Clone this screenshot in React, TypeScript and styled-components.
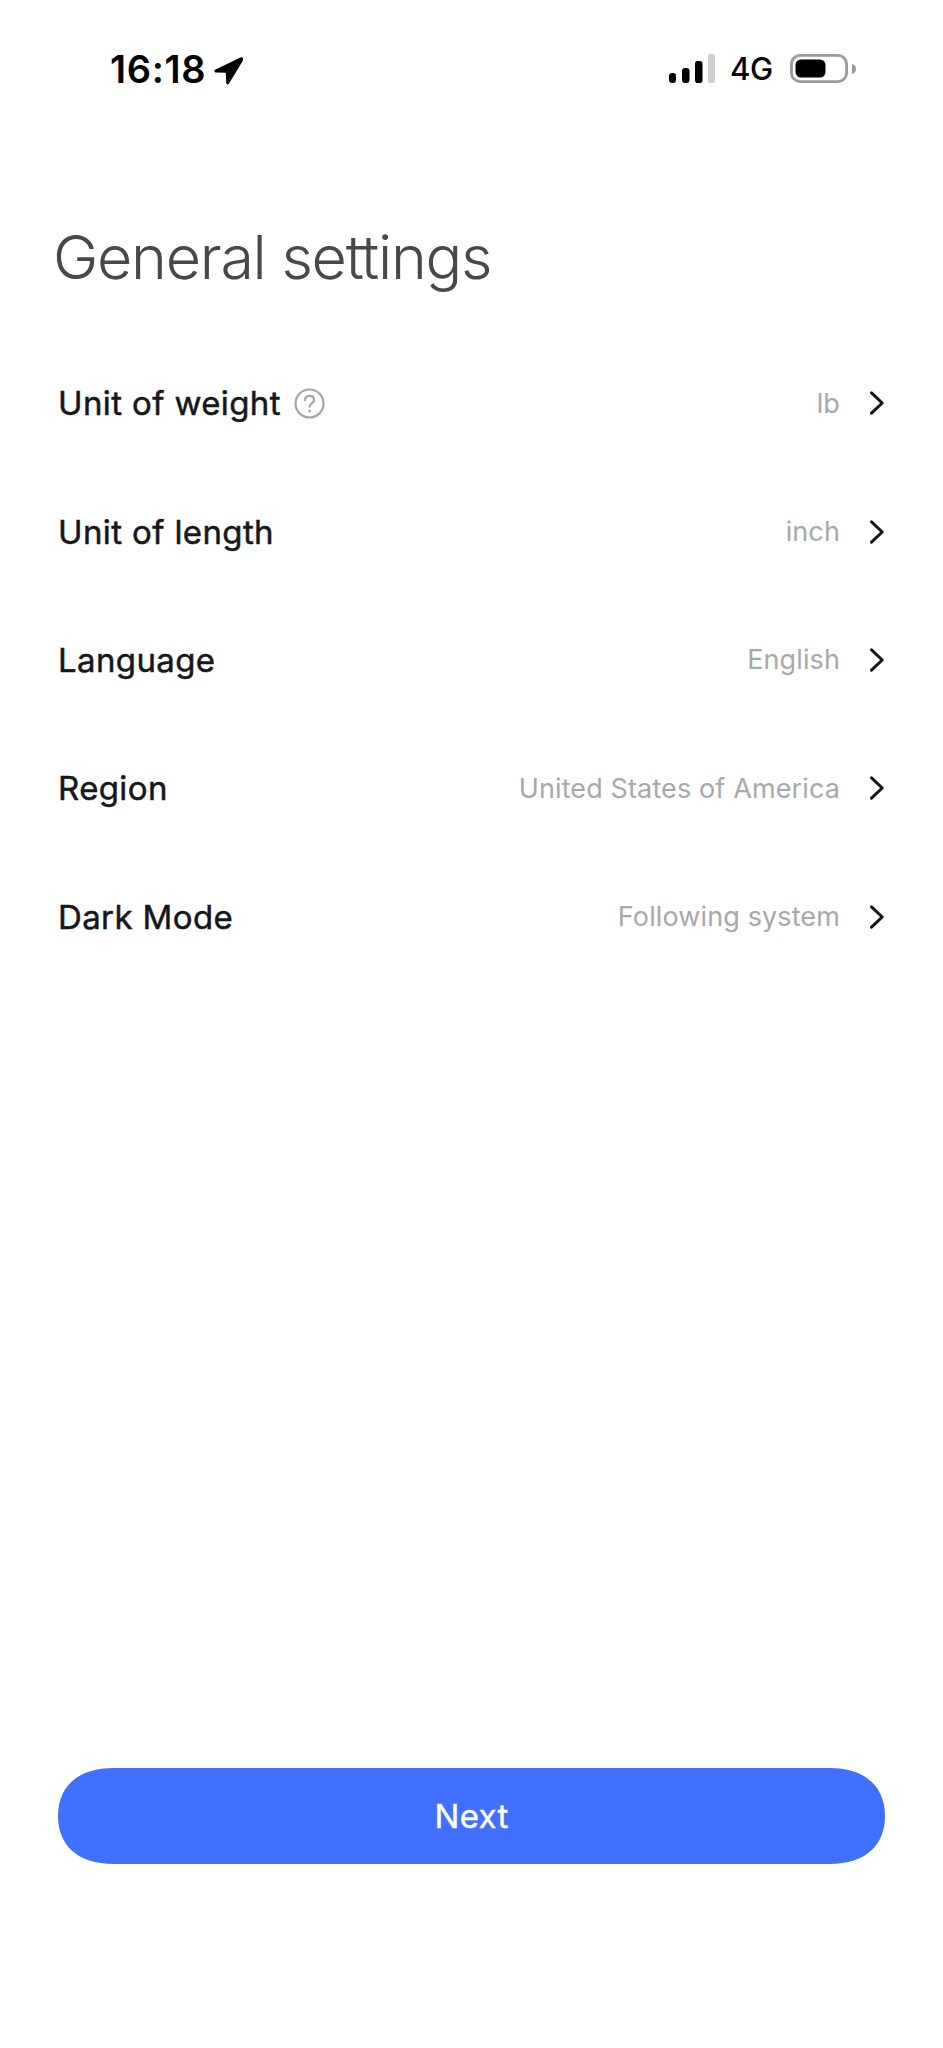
import React from "react";
import styled, { createGlobalStyle } from "styled-components";

const Global = createGlobalStyle`
  html, body { margin: 0; padding: 0; background: #fff; }
  body { font-family: Inter, "Liberation Sans", sans-serif; -webkit-font-smoothing: antialiased; }
  * { box-sizing: border-box; }
`;

const Page = styled.main`
  width: 943px;
  height: 2048px;
  display: flex;
  flex-direction: column;
  background: #fff;
  padding-bottom: 184px;
`;

const StatusBar = styled.header`
  display: flex;
  align-items: center;
  justify-content: space-between;
  height: 30px;
  margin-top: 54px;
  padding: 0 87px 0 110px;
  color: #000;
`;

const StatusGroup = styled.div<{ $gap: number }>`
  display: flex;
  align-items: center;
  gap: ${(p) => p.$gap}px;
`;

const Clock = styled.span`
  font-size: 38px;
  line-height: 32px;
  font-weight: 600;
  letter-spacing: 0.7px;
`;

const LocationArrow = styled.svg`
  width: 31px;
  height: 30px;
  margin-top: 3px;
  margin-left: 1px;
`;

const Network = styled.span`
  font-size: 31px;
  line-height: 30px;
  font-weight: 500;
  letter-spacing: -0.3px;
  margin-right: 2px;
`;

const Title = styled.h1`
  margin: 137px 0 46px 53px;
  font-size: 61px;
  line-height: 72px;
  font-weight: 300;
  letter-spacing: -1.3px;
  color: #48484c;
`;

const List = styled.section`
  display: flex;
  flex-direction: column;
`;

const Row = styled.div`
  height: 128.4px;
  display: flex;
  align-items: center;
  padding: 0 58px;
`;

const Label = styled.span`
  font-size: 33px;
  font-weight: 400;
  color: #15171b;
  letter-spacing: 0.38px;
  -webkit-text-stroke: 0.5px #15171b;
`;

const Help = styled.svg`
  width: 31px;
  height: 31px;
  margin-left: 13px;
  flex: none;
`;

const Value = styled.span`
  margin-left: auto;
  font-size: 27px;
  font-weight: 400;
  letter-spacing: 0.12px;
  color: #a8a8aa;
`;

const Chevron = styled.svg`
  width: 16px;
  height: 24px;
  margin-left: 29px;
  flex: none;
`;

const NextButton = styled.button`
  margin: auto 58px 0;
  height: 96px;
  border: 0;
  padding: 0;
  background: #416fff;
  clip-path: path("M56 0H771C809 0 827 20 827 48C827 76 809 96 771 96H56C18 96 0 76 0 48C0 20 18 0 56 0Z");
  color: #fff;
  font-family: inherit;
  font-size: 33px;
  font-weight: 400;
  letter-spacing: 0.3px;
  -webkit-text-stroke: 0.4px #fff;
`;

const rows = [
  { label: "Unit of weight", value: "lb", help: true },
  { label: "Unit of length", value: "inch" },
  { label: "Language", value: "English" },
  { label: "Region", value: "United States of America" },
  { label: "Dark Mode", value: "Following system" },
];

export default function App() {
  return (
    <>
      <Global />
      <Page>
        <StatusBar>
          <StatusGroup $gap={6}>
            <Clock>16:18</Clock>
            <LocationArrow viewBox="0 0 31 30">
              <path
                d="M27.5 1.5 2.5 13.5c-1.8.9-1.2 3 .7 3l9.6.2.4 10c.1 2 2.200 2.400 3 .6L30 4.500c.8-2-.6-3.800-2.500-3z"
                fill="#000"
              />
            </LocationArrow>
          </StatusGroup>
          <StatusGroup $gap={15}>
            <svg width="46" height="30" viewBox="0 0 46 30">
              <rect x="0" y="19" width="7" height="10" rx="3.200" fill="#000" />
              <rect x="13" y="14" width="7.500" height="15" rx="3" fill="#000" />
              <rect x="26" y="7" width="7.500" height="22" rx="2.800" fill="#000" />
              <rect x="39" y="0" width="7" height="29" rx="2.500" fill="#cfcfcf" />
            </svg>
            <Network>4G</Network>
            <svg width="66" height="30" viewBox="0 0 66 30">
              <rect x="1.400" y="1.400" width="55.200" height="26.200" rx="8.500" fill="none" stroke="#9a9a9a" strokeWidth="2.800" />
              <rect x="5.500" y="5.500" width="30" height="18" rx="5.500" fill="#000" />
              <path d="M62 10c2.500.7 4 2.500 4 5s-1.500 4.300-4 5z" fill="#9a9a9a" />
            </svg>
          </StatusGroup>
        </StatusBar>
        <Title>General settings</Title>
        <List>
          {rows.map((r) => (
            <Row key={r.label}>
              <Label>{r.label}</Label>
              {r.help && (
                <Help viewBox="0 0 31 31">
                  <circle cx="15.500" cy="15.500" r="14" fill="none" stroke="#a6a6a6" strokeWidth="2.200" />
                  <path
                    d="M11 12.200c0-2.800 2-4.400 4.600-4.400s4.500 1.600 4.500 4c0 3.600-4.400 3.400-4.400 6.900"
                    fill="none"
                    stroke="#a6a6a6"
                    strokeWidth="2.200"
                    strokeLinecap="round"
                  />
                  <circle cx="15.600" cy="23" r="1.500" fill="#a6a6a6" />
                </Help>
              )}
              <Value>{r.value}</Value>
              <Chevron viewBox="0 0 16 24">
                <path
                  d="M2.500 1.800 13.200 12 2.500 22.200"
                  fill="none"
                  stroke="#17171a"
                  strokeWidth="3"
                  strokeLinecap="round"
                  strokeLinejoin="round"
                />
              </Chevron>
            </Row>
          ))}
        </List>
        <NextButton>Next</NextButton>
      </Page>
    </>
  );
}
